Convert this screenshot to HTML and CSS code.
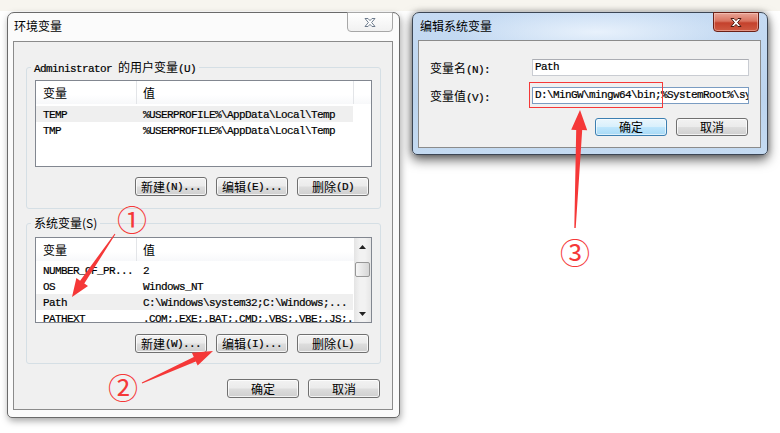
FILE: index.html
```html
<!DOCTYPE html>
<html lang="zh-CN">
<head>
<meta charset="utf-8">
<title>环境变量</title>
<link rel="stylesheet" href="styles.css">
</head>
<body>
<div class="desktop">

  <section class="win win-env">
    <header class="titlebar">
      <span class="title">环境变量</span>
      <button class="close close-off" type="button" aria-label="关闭">
        <svg width="12" height="9" viewBox="0 0 12 9"><polygon points="1,0.5 4,0.5 6,2.6 8,0.5 11,0.5 7.6,4.5 11,8.5 8,8.5 6,6.4 4,8.5 1,8.5 4.4,4.5" fill="#ffffff" stroke="#6c7a8b" stroke-width="1" stroke-linejoin="round"/></svg>
      </button>
    </header>
    <div class="client">
      <fieldset class="group g-user">
        <legend><span class="m">Administrator </span>的用户变量<span class="m">(U)</span></legend>
        <div class="list l-user">
          <div class="list-main">
            <div class="lhead"><span class="c1">变量</span><span class="c2">值</span><span class="fill"></span></div>
            <div class="row sel"><span class="c1 m">TEMP</span><span class="c2 m">%USERPROFILE%\AppData\Local\Temp</span></div>
            <div class="row"><span class="c1 m">TMP</span><span class="c2 m">%USERPROFILE%\AppData\Local\Temp</span></div>
          </div>
        </div>
        <div class="btnrow r-user">
          <button class="btn" type="button">新建<span class="m">(N)...</span></button>
          <button class="btn" type="button">编辑<span class="m">(E)...</span></button>
          <button class="btn" type="button">删除<span class="m">(D)</span></button>
        </div>
      </fieldset>

      <fieldset class="group g-sys">
        <legend>系统变量(S)</legend>
        <div class="list l-sys">
          <div class="list-main">
            <div class="lhead"><span class="c1">变量</span><span class="c2">值</span></div>
            <div class="row"><span class="c1 m">NUMBER_OF_PR...</span><span class="c2 m">2</span></div>
            <div class="row"><span class="c1 m">OS</span><span class="c2 m">Windows_NT</span></div>
            <div class="row sel"><span class="c1 m">Path</span><span class="c2 m">C:\Windows\system32;C:\Windows;...</span></div>
            <div class="row"><span class="c1 m">PATHEXT</span><span class="c2 m">.COM;.EXE;.BAT;.CMD;.VBS;.VBE;.JS;...</span></div>
          </div>
          <div class="vscroll">
            <span class="sb-btn"><svg width="7" height="4" viewBox="0 0 7 4"><polygon points="3.5,0 7,4 0,4" fill="#222"/></svg></span>
            <span class="thumb"></span>
            <span class="sb-track"></span>
            <span class="sb-btn"><svg width="7" height="4" viewBox="0 0 7 4"><polygon points="0,0 7,0 3.5,4" fill="#222"/></svg></span>
          </div>
        </div>
        <div class="btnrow r-sys">
          <button class="btn" type="button">新建<span class="m">(W)...</span></button>
          <button class="btn" type="button">编辑<span class="m">(I)...</span></button>
          <button class="btn" type="button">删除<span class="m">(L)</span></button>
        </div>
      </fieldset>

      <div class="foot">
        <button class="btn" type="button">确定</button>
        <button class="btn" type="button">取消</button>
      </div>
    </div>
  </section>

  <section class="win win-edit">
    <header class="titlebar">
      <span class="title">编辑系统变量</span>
      <button class="close close-on" type="button" aria-label="关闭">
        <svg width="12" height="9" viewBox="0 0 12 9"><polygon points="1,0.5 4,0.5 6,2.6 8,0.5 11,0.5 7.6,4.5 11,8.5 8,8.5 6,6.4 4,8.5 1,8.5 4.4,4.5" fill="#ffffff" stroke="#4a1810" stroke-width="1" stroke-linejoin="round"/></svg>
      </button>
    </header>
    <div class="client">
      <div class="form">
        <span class="label">变量名<span class="m">(N):</span></span>
        <span class="field m">Path</span>
        <span class="label">变量值<span class="m">(V):</span></span>
        <span class="field focus m">D:\MinGW\mingw64\bin;%SystemRoot%\system32;%SystemRoot%</span>
      </div>
      <div class="edit-btns">
        <button class="btn btn-default" type="button">确定</button>
        <button class="btn" type="button">取消</button>
      </div>
    </div>
  </section>

  <div class="redbox"></div>

  <svg class="marks" width="780" height="433" viewBox="0 0 780 433">
    <polygon points="115.4,234.3 84.3,283.5 88,286.1 72,297 76.4,278.1 80.1,280.7 114.6,233.7" fill="#f53838"/>
    <polygon points="142.2,383.5 195.8,361.5 197.7,365.6 213,351 191.9,352.8 193.8,356.9 141.8,382.5" fill="#f53838"/>
    <polygon points="575.7,228 582.2,130.1 587.2,130.3 580,110 571.2,129.7 576.2,129.9 574.3,228" fill="#f53838"/>
  </svg>

  <span class="num n1">①</span>
  <span class="num n2">②</span>
  <span class="num n3">③</span>
</div>
</body>
</html>
```

FILE: styles.css
```css
html, body {
  margin: 0;
  padding: 0;
}

body {
  width: 780px;
  height: 433px;
  overflow: hidden;
  background: linear-gradient(#f7f5ef 0, #f7f5ef 11px, #ffffff 11px);
  font-family: "Noto Sans CJK SC", "Liberation Sans", sans-serif;
  font-size: 12px;
  line-height: 16px;
  color: #000;
}

.desktop {
  position: relative;
  width: 780px;
  height: 433px;
}

.m {
  font-family: "Liberation Mono", "Noto Sans CJK SC", monospace;
  font-size: 11px;
  line-height: 12px;
  letter-spacing: -0.6px;
  color: #000;
  -webkit-text-stroke: 0.2px #000;
}

/* ---------- windows ---------- */
.win {
  position: absolute;
  box-sizing: border-box;
  display: flex;
  flex-direction: column;
  border: 1px solid #5f5f5f;
  border-radius: 7px 7px 5px 5px;
}

.win-env {
  left: 7px;
  top: 12px;
  width: 393px;
  height: 406px;
  padding: 0 6px 7px 5px;
  background: #fbfbfb;
  border-color: #6a6a6a;
  box-shadow: 1px 3px 7px rgba(0, 0, 0, 0.35);
}

.win-edit {
  left: 412px;
  top: 12px;
  width: 356px;
  height: 143px;
  padding: 0 6px 6px 5px;
  background: linear-gradient(#c6dbf3, #bcd4ee 60%, #c4daf1);
  border-color: #3c4654;
  box-shadow: 0 5px 12px rgba(0, 0, 0, 0.6), 0 0 6px rgba(0, 0, 0, 0.3);
}

.titlebar {
  display: flex;
  justify-content: space-between;
  align-items: flex-start;
  flex: none;
}

.win-env .titlebar {
  height: 28px;
}

.win-edit .titlebar {
  height: 27px;
  margin: 0 -5px 0 -5px;
  padding: 0 6px 0 5px;
  background: radial-gradient(ellipse 140px 24px at 52% 70%, rgba(236, 244, 253, 0.9), rgba(236, 244, 253, 0) 100%);
}

.title {
  margin-top: 5px;
  line-height: 16px;
}

.win-env .title {
  padding-left: 1px;
}

.win-edit .title {
  padding-left: 2px;
}

.close {
  width: 46px;
  height: 20px;
  margin-top: -1px;
  padding: 0;
  display: flex;
  align-items: center;
  justify-content: center;
  border-radius: 0 0 4px 4px;
  box-sizing: border-box;
}

.close-off {
  border: 1px solid #a7a7a7;
  background: linear-gradient(#ffffff, #f1f1f1);
}

.close-on {
  height: 20px;
  margin-right: 1px;
  border: 1px solid #6b2016;
  background: linear-gradient(#e9a597 0%, #d9735f 45%, #c4412c 55%, #cf5a42 100%);
  box-shadow: inset 0 0 0 1px rgba(255, 220, 210, 0.45);
}

.client {
  flex: 1;
  display: flex;
  flex-direction: column;
  border: 1px solid #8b8b8b;
  background: #f0f0f0;
  min-height: 0;
}

/* ---------- group boxes ---------- */
.group {
  margin: 0 11px 0 12px;
  padding: 0 8px;
  min-width: 0;
  border: 1px solid #d5dfe5;
  border-radius: 3px;
}

.group legend {
  margin-left: -4px;
  padding: 0 3px;
  height: 16px;
  line-height: 16px;
}

.g-user {
  margin-top: 17px;
  padding-top: 5px;
  padding-bottom: 12px;
}

.g-sys {
  margin-top: 6px;
  padding-top: 6px;
  padding-bottom: 10px;
}

/* ---------- list views ---------- */
.list {
  display: flex;
  box-sizing: border-box;
  border: 1px solid #828790;
  background: #fff;
  overflow: hidden;
}

.l-user {
  height: 87px;
}

.l-sys {
  height: 86px;
}

.list-main {
  flex: 1;
  display: flex;
  flex-direction: column;
  overflow: hidden;
  min-width: 0;
}

.lhead {
  display: flex;
  height: 23px;
  flex: none;
  margin-bottom: 1px;
  background: linear-gradient(#ffffff, #ffffff 60%, #f7f8fa);
}

.l-user .lhead {
  margin-bottom: 2px;
}

.lhead span {
  display: flex;
  align-items: center;
  box-sizing: border-box;
  height: 23px;
}

.lhead .c1 {
  width: 101px;
  padding-left: 7px;
  border-right: 1px solid #e3e5e8;
}

.lhead .c2 {
  width: 217px;
  padding-left: 6px;
  border-right: 1px solid #e3e5e8;
}

.l-sys .lhead .c2 {
  border-right: none;
  width: 216px;
}

.lhead .fill {
  flex: 1;
}

.row {
  display: flex;
  flex: none;
  width: 317px;
  height: 16px;
  white-space: nowrap;
}

.row.sel {
  background: #efefef;
}

.row .c1,
.row .c2 {
  height: 16px;
  padding-top: 1px;
  line-height: 16px;
  box-sizing: border-box;
  overflow: hidden;
}

.row .c1 {
  width: 101px;
  padding-left: 7px;
}

.row .c2 {
  width: 216px;
  padding-left: 6px;
}

.vscroll {
  width: 17px;
  flex: none;
  display: flex;
  flex-direction: column;
  background: linear-gradient(to right, #e4e4e4, #f2f2f2 35%, #f2f2f2 65%, #e6e6e6);
}

.sb-btn {
  height: 17px;
  flex: none;
  display: flex;
  align-items: center;
  justify-content: center;
}

.thumb {
  height: 15px;
  flex: none;
  margin: 7px 1px 0 1px;
  box-sizing: border-box;
  border: 1px solid #979797;
  border-radius: 2px;
  background: linear-gradient(to right, #f6f6f6, #e6e6e6 50%, #d6d6d6);
}

.sb-track {
  flex: 1;
}

/* ---------- buttons ---------- */
.btn {
  width: 72px;
  height: 19px;
  padding: 0;
  box-sizing: border-box;
  display: flex;
  align-items: center;
  justify-content: center;
  border: 1px solid #707070;
  border-radius: 3px;
  background: linear-gradient(#f2f2f2 0%, #ebebeb 48%, #dddddd 52%, #cfcfcf 100%);
  box-shadow: inset 0 0 0 1px rgba(255, 255, 255, 0.75);
  font-family: "Noto Sans CJK SC", sans-serif;
  font-size: 12px;
  line-height: 16px;
  color: #000;
  white-space: nowrap;
}

.btn-default {
  border-color: #3c7fb1;
  background: linear-gradient(#eaf6fd 0%, #d9f0fc 48%, #bee6fd 52%, #a7d9f5 100%);
  box-shadow: inset 0 0 0 1px rgba(255, 255, 255, 0.6);
}

.btnrow {
  display: flex;
  justify-content: flex-end;
  gap: 9px;
  padding-right: 3px;
}

.r-user {
  margin-top: 10px;
}

.r-sys {
  margin-top: 11px;
}

.foot {
  display: flex;
  justify-content: flex-end;
  gap: 9px;
  margin: 15px 12px 0 0;
}

/* ---------- edit dialog ---------- */
.form {
  display: grid;
  grid-template-columns: 102px 217px;
  grid-auto-rows: 17px;
  row-gap: 11px;
  align-items: center;
  padding: 18px 0 0 11px;
}

.label {
  line-height: 16px;
  white-space: nowrap;
}

.field {
  height: 17px;
  box-sizing: border-box;
  padding-left: 2px;
  border: 1px solid #c9ccd2;
  border-top-color: #abadb3;
  background: #fff;
  line-height: 15px;
  white-space: nowrap;
  overflow: hidden;
}

.field.focus {
  border-color: #7a9cc2;
}

.edit-btns {
  display: flex;
  justify-content: flex-end;
  gap: 9px;
  margin-top: 14px;
  padding-right: 12px;
}

.edit-btns .btn {
  height: 18px;
}

/* ---------- annotations (overlay) ---------- */
.redbox {
  position: absolute;
  left: 529px;
  top: 82px;
  width: 134px;
  height: 26px;
  box-sizing: border-box;
  border: 1px solid #f53838;
}

.marks {
  position: absolute;
  left: 0;
  top: 0;
  pointer-events: none;
}

.num {
  position: absolute;
  color: #f53838;
  font-family: "Noto Sans CJK SC", sans-serif;
  font-size: 30px;
  line-height: 30px;
}

.n1 {
  left: 117px;
  top: 203px;
}

.n2 {
  left: 108px;
  top: 371px;
}

.n3 {
  left: 560px;
  top: 236px;
}
```
